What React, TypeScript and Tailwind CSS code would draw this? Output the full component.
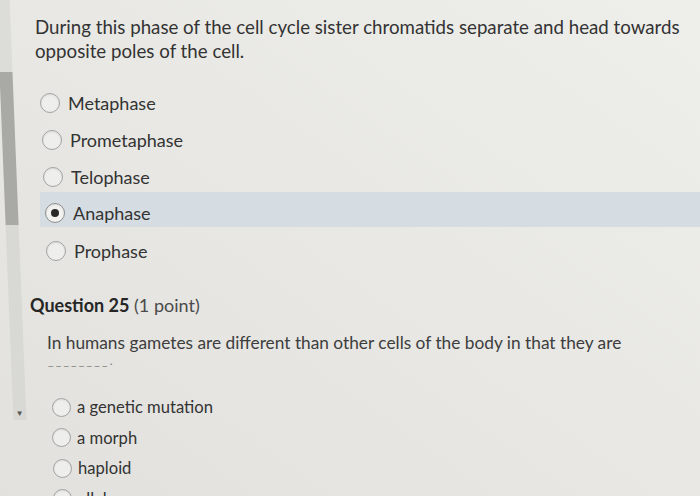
import React from "react";

function Radio({ size, checked = false }: { size: "lg" | "sm"; checked?: boolean }) {
  const dim = size === "lg" ? "w-[20px] h-[20px]" : "w-[19px] h-[19px]";
  return (
    <span
      className={`${dim} shrink-0 rounded-full border-[1.5px] ${
        checked ? "border-[#8c8c8c] bg-[#f2f2f1]" : "border-[#a3a3a1] bg-[#eeeeec]"
      } flex items-center justify-center shadow-[inset_0_1px_2px_rgba(0,0,0,0.08)]`}
    >
      {checked && <span className="w-[8px] h-[8px] rounded-full bg-[#2a2a2a]" />}
    </span>
  );
}

export default function App() {
  const q1: { label: string; ml: string }[] = [
    { label: "Metaphase", ml: "ml-[16px]" },
    { label: "Prometaphase", ml: "ml-[18px]" },
    { label: "Telophase", ml: "ml-[19px]" },
  ];
  const q2: { label: string; ml: string }[] = [
    { label: "a genetic mutation", ml: "ml-[28px]" },
    { label: "a morph", ml: "ml-[28px]" },
    { label: "haploid", ml: "ml-[29px]" },
    { label: "alleles", ml: "ml-[29px]" },
  ];

  return (
    <div className="w-[700px] h-[496px] overflow-hidden flex bg-linear-to-bl from-[#eeeeeb] to-[#e2e1dd] font-['Lato','Noto_Sans',sans-serif] text-[#333]">
      {/* scrollbar */}
      <div className="w-[24px] shrink-0">
        <div className="ml-[5px] w-[13px] h-[420px] flex flex-col skew-x-[2.3deg]">
          <div className="h-[72px] bg-[#dcdcd8]" />
          <div className="h-[153px] bg-[#a9a9a6]" />
          <div className="flex-1 bg-[#d8d8d4] flex flex-col justify-end items-center pb-[2px]">
            <span className="text-[8px] leading-[10px] text-[#555]">▼</span>
          </div>
        </div>
      </div>

      {/* content */}
      <div className="flex-1 flex flex-col">
        <p className="ml-[11px] mt-[15px] text-[18.7px] leading-[24px] text-[#333]">
          During this phase of the cell cycle sister chromatids separate and head towards opposite poles of the cell.
        </p>

        <div className="mt-[21px] flex flex-col">
          {q1.map((o) => (
            <div key={o.label} className={`h-[37px] flex items-center ${o.ml}`}>
              <Radio size="lg" />
              <span className="ml-[8px] text-[18px] leading-[24px] text-[#333]">{o.label}</span>
            </div>
          ))}
          <div className="mt-[-3px] h-[35px] pt-[7px] ml-[16px] pl-[5px] flex items-center bg-[#d6dde2]">
            <Radio size="lg" checked />
            <span className="ml-[8px] text-[18px] leading-[24px] text-[#333]">Anaphase</span>
          </div>
          <div className="mt-[5px] h-[37px] flex items-center ml-[22px]">
            <Radio size="lg" />
            <span className="ml-[8px] text-[18px] leading-[24px] text-[#333]">Prophase</span>
          </div>
        </div>

        <div className="mt-[24px] ml-[6px] text-[18px] leading-[24px]">
          <span className="font-bold text-[#262626]">Question 25</span>{" "}
          <span className="text-[#4a4a4a]">(1 point)</span>
        </div>

        <p className="mt-[14px] ml-[23px] text-[17.3px] leading-[24px] text-[#3d3d3d]">
          In humans gametes are different than other cells of the body in that they are
        </p>
        <div className="ml-[24px] text-[12px] leading-[12px] tracking-[2.2px] text-[#7a7a7a]">
          ________.
        </div>

        <div className="mt-[25px] flex flex-col">
          {q2.map((o) => (
            <div key={o.label} className={`h-[30.5px] shrink-0 flex items-center ${o.ml}`}>
              <Radio size="sm" />
              <span className="ml-[6px] text-[16.6px] leading-[20px] text-[#333]">{o.label}</span>
            </div>
          ))}
        </div>
      </div>
    </div>
  );
}
